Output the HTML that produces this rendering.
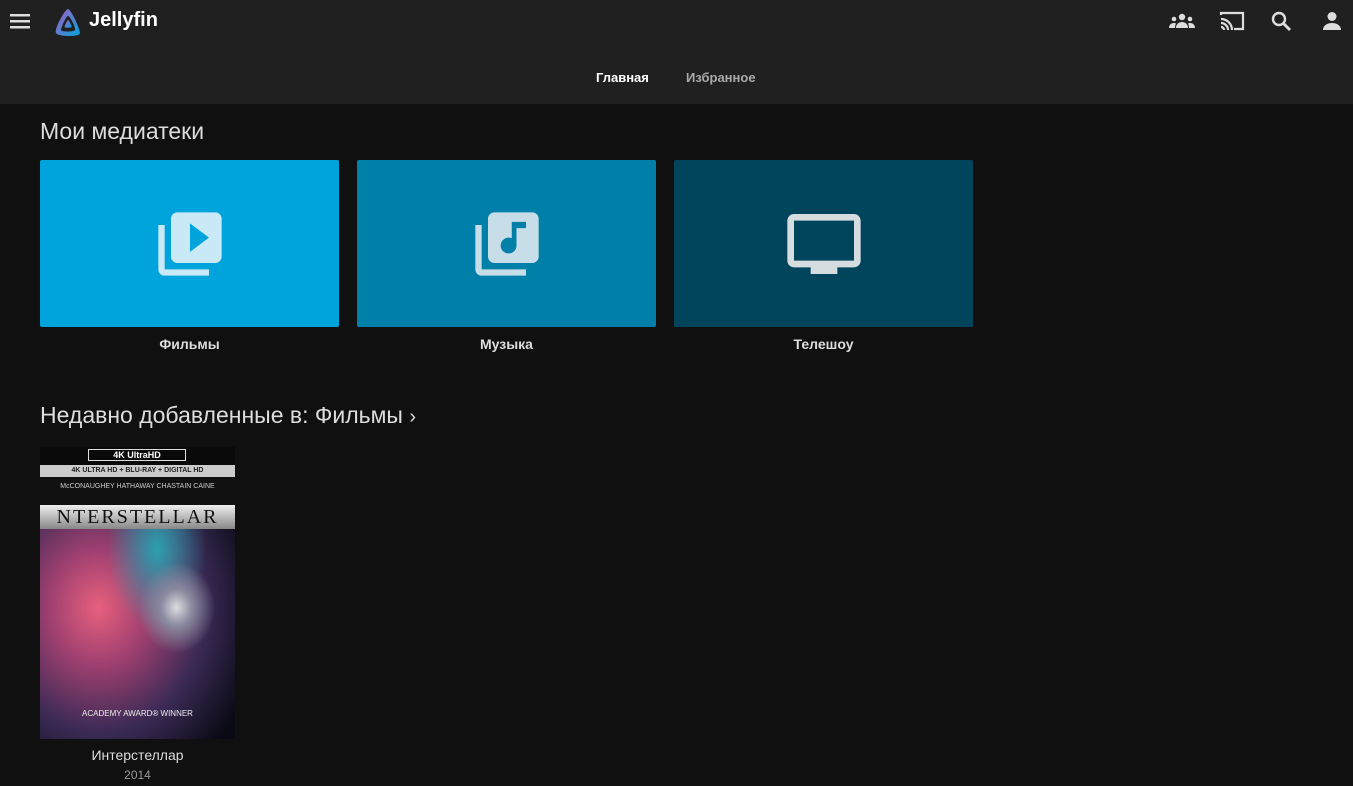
<!DOCTYPE html>
<html><head><meta charset="utf-8"><style>
*{margin:0;padding:0;box-sizing:border-box}
body{width:1353px;height:786px;background:#101010;font-family:"Liberation Sans",sans-serif;color:#ddd;position:relative;overflow:hidden}
.hdr{position:absolute;left:0;top:0;width:1353px;height:104px;background:#202020}
.abs{position:absolute}
.tile{position:absolute;top:160px;width:299px;height:167px;border-radius:2px;display:flex;align-items:center;justify-content:center}
.lbl{position:absolute;top:336px;width:299px;text-align:center;font-size:14px;font-weight:bold;color:#ddd}
h2{position:absolute;font-size:23px;font-weight:normal;color:#ddd}
</style></head><body>
<div class="hdr"></div>
<svg class="abs" style="left:10px;top:13px" width="20" height="16"><rect y="1" width="20" height="2.5" fill="#ddd"/><rect y="7" width="20" height="2.5" fill="#ddd"/><rect y="13" width="20" height="2.5" fill="#ddd"/></svg>
<svg class="abs" style="left:53px;top:7px" width="30" height="30" viewBox="0 0 30 30"><defs><linearGradient id="g" x1="0" y1="0" x2="1" y2="1"><stop offset="0" stop-color="#aa5cc3"/><stop offset="1" stop-color="#00a4dc"/></linearGradient></defs><path d="M15 2C12 2 1 22 3 26S27 30 27 26 18 2 15 2Z M15 9C17 9 23 21 22 23S8 25 8 23 13 9 15 9Z" fill="url(#g)" fill-rule="evenodd"/><path d="M15 13C16 13 19 19 18.5 20S11.5 21 11.5 20 14 13 15 13Z" fill="url(#g)"/></svg>
<div class="abs" style="left:89px;top:9px;font-size:20px;font-weight:bold;color:#fff">Jellyfin</div>
<svg class="abs" style="left:1169px;top:12px" width="26" height="18" viewBox="0 0 26 18"><circle cx="13" cy="5" r="3.2" fill="#ddd"/><path d="M7 16c0-4 3-6 6-6s6 2 6 6z" fill="#ddd"/><circle cx="5" cy="7" r="2.3" fill="#ddd"/><path d="M0 16c0-3 2-5 5-5 1 0 1.5.3 2 .5-.7 1.3-1 2.8-1 4.5z" fill="#ddd"/><circle cx="21" cy="7" r="2.3" fill="#ddd"/><path d="M26 16c0-3-2-5-5-5-1 0-1.5.3-2 .5.7 1.3 1 2.8 1 4.5z" fill="#ddd"/></svg>
<svg class="abs" style="left:1219px;top:10px" width="26" height="22" viewBox="0 0 26 22"><path d="M2 5V3h22v16h-9" fill="none" stroke="#ddd" stroke-width="2.2"/><path d="M2 9a11 11 0 0 1 11 11M2 13a7 7 0 0 1 7 7M2 17a3 3 0 0 1 3 3" fill="none" stroke="#ddd" stroke-width="2.2"/></svg>
<svg class="abs" style="left:1271px;top:11px" width="22" height="22" viewBox="0 0 22 22"><circle cx="8" cy="8" r="6" fill="none" stroke="#ddd" stroke-width="2.4"/><path d="M12.5 12.5L19 19" stroke="#ddd" stroke-width="3"/></svg>
<svg class="abs" style="left:1322px;top:11px" width="20" height="20" viewBox="0 0 20 20"><circle cx="10" cy="5.5" r="4.5" fill="#ddd"/><path d="M1 19c0-5 5-7 9-7s9 2 9 7z" fill="#ddd"/></svg>
<div class="abs" style="left:596px;top:70px;font-size:13px;font-weight:bold;color:#fff">Главная</div>
<div class="abs" style="left:686px;top:70px;font-size:13px;font-weight:bold;color:#aaa">Избранное</div>
<h2 style="left:40px;top:118px">Мои медиатеки</h2>
<div class="tile" style="left:40px;background:#00a4dc"><svg width="76" height="76" viewBox="0 0 24 24"><path d="M4 6H2v14c0 1.1.9 2 2 2h14v-2H4V6zm16-4H8c-1.1 0-2 .9-2 2v12c0 1.1.9 2 2 2h12c1.1 0 2-.9 2-2V4c0-1.1-.9-2-2-2zm-8 12.5v-9l6 4.5-6 4.5z" fill="#dff1f8" opacity=".9"/></svg></div>
<div class="tile" style="left:357px;background:#007fa9"><svg width="76" height="76" viewBox="0 0 24 24"><path d="M20 2H8c-1.1 0-2 .9-2 2v12c0 1.1.9 2 2 2h12c1.1 0 2-.9 2-2V4c0-1.1-.9-2-2-2zm-2 5h-3v5.5a2.5 2.5 0 0 1-5 0 2.5 2.5 0 0 1 3.5-2.3V5h4.5v2zM4 6H2v14c0 1.1.9 2 2 2h14v-2H4V6z" fill="#dde8ee" opacity=".9"/></svg></div>
<div class="tile" style="left:674px;background:#00455c"><svg width="80" height="80" viewBox="0 0 24 24"><path d="M21 3H3c-1.1 0-2 .9-2 2v12c0 1.1.9 2 2 2h5v2h8v-2h5c1.1 0 2-.9 2-2V5c0-1.1-.9-2-2-2zm0 14H3V5h18v12z" fill="#d6dde0"/></svg></div>
<div class="lbl" style="left:40px">Фильмы</div>
<div class="lbl" style="left:357px">Музыка</div>
<div class="lbl" style="left:674px">Телешоу</div>
<h2 style="left:40px;top:402px">Недавно добавленные в: Фильмы <span style="font-size:20px">›</span></h2>
<div class="abs" style="left:40px;top:447px;width:195px;height:292px;overflow:hidden;background:radial-gradient(ellipse at 70% 55%,#dcdce0 0%,#8a8aa0 8%,transparent 20%),radial-gradient(ellipse at 60% 35%,#2aa0b0 0%,transparent 30%),radial-gradient(ellipse at 30% 55%,#e8607e 0%,#a04070 25%,#3a2a55 55%,#0a0a14 85%)">
<div class="abs" style="left:0;top:0;width:195px;height:18px;background:#0a0a0a"></div>
<div class="abs" style="left:48px;top:2px;width:98px;height:12px;border:1px solid #ddd;color:#fff;font-size:9px;font-weight:bold;text-align:center;line-height:10px">4K UltraHD</div>
<div class="abs" style="left:0;top:18px;width:195px;height:12px;background:#ccc;color:#222;font-size:7px;font-weight:bold;text-align:center;line-height:12px">4K ULTRA HD + BLU-RAY + DIGITAL HD</div>
<div class="abs" style="left:0;top:30px;width:195px;height:30px;background:#111;color:#ccc;font-size:7px;text-align:center;line-height:20px">McCONAUGHEY HATHAWAY CHASTAIN CAINE</div>
<div class="abs" style="left:0;top:58px;width:195px;height:24px;background:linear-gradient(#eee,#888);color:#111;font-family:'Liberation Serif',serif;font-size:20px;text-align:center;line-height:24px;letter-spacing:2px">NTERSTELLAR</div>
<div class="abs" style="left:0;top:262px;width:195px;text-align:center;font-size:8px;color:#eee">ACADEMY AWARD® WINNER</div>
</div>
<div class="abs" style="left:40px;top:747px;width:195px;text-align:center;font-size:14px;color:#ddd">Интерстеллар</div>
<div class="abs" style="left:40px;top:768px;width:195px;text-align:center;font-size:12px;color:#999">2014</div>
</body></html>
